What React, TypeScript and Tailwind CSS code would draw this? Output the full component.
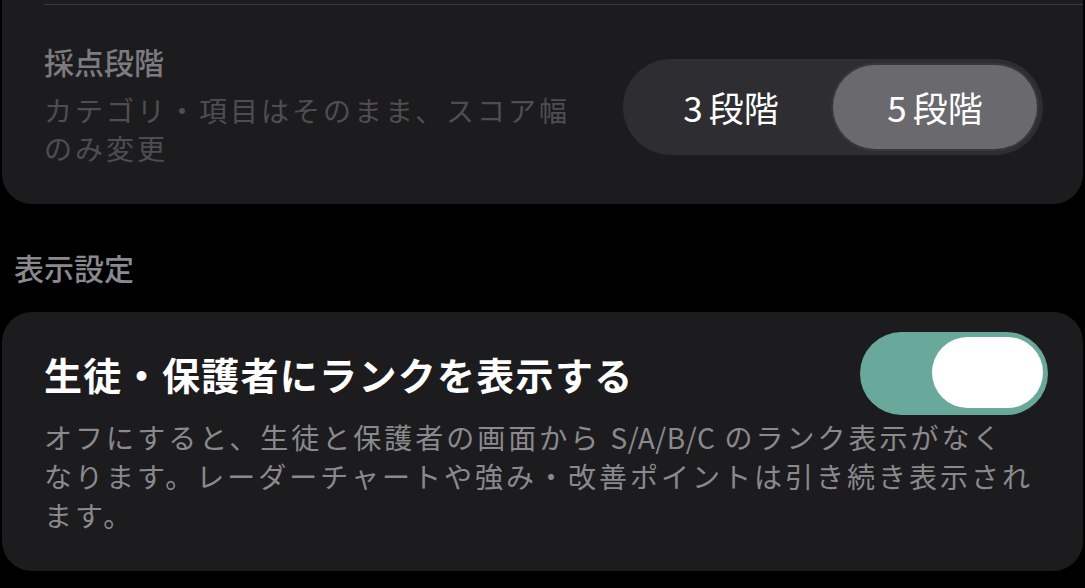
import React from "react";

export default function App() {
  return (
    <div className="w-[1085px] h-[588px] overflow-hidden bg-black font-['Noto_Sans_CJK_JP','Noto_Sans',sans-serif]">
      {/* Top card (continues above viewport) */}
      <div className="mx-[2px] rounded-b-[30px] bg-[#1c1c1e] pt-[4px] pb-[37px]">
        <div className="ml-[42px] h-px bg-[#3a3a3c]" />
        <div className="flex items-start justify-between pl-[42px] pr-[40px] pt-[37px]">
          <div>
            <div className="text-[30px] leading-[38px] font-medium text-[#7c7c80]">採点段階</div>
            <div className="mt-[11px] whitespace-nowrap text-[28px] leading-[38px] tracking-[3px] text-[#4e4e52]">
              カテゴリ・項目はそのまま、スコア幅
              <br />
              のみ変更
            </div>
          </div>
          <div className="mt-[17px] grid h-[96px] w-[420px] grid-cols-2 rounded-full bg-[#2e2e32] p-[6px]">
            <div className="flex items-center justify-center gap-[6px] text-[35px] font-normal text-white">
              <span>3</span>
              <span>段階</span>
            </div>
            <div className="flex items-center justify-center gap-[6px] rounded-full bg-[#69696e] text-[35px] font-normal text-white shadow-[0_0_0_2px_#38383c]">
              <span>5</span>
              <span>段階</span>
            </div>
          </div>
        </div>
      </div>

      {/* Section header */}
      <div className="mt-[44px] pl-[14px] text-[30px] leading-[38px] font-medium text-[#8a8a8e]">
        表示設定
      </div>

      {/* Second card */}
      <div className="mx-[2px] mt-[26px] rounded-[30px] bg-[#1c1c1e] pt-[20px] pb-[36px] pl-[42px] pr-[35px]">
        <div className="flex h-[83px] items-center justify-between">
          <div className="text-[38px] font-bold leading-[46px] tracking-[1.3px] text-white">
            生徒・保護者にランクを表示する
          </div>
          <div className="relative h-[83px] w-[188px] rounded-full bg-[#69a99c]">
            <div className="absolute right-[5px] top-[5px] h-[71px] w-[111px] rounded-full bg-white" />
          </div>
        </div>
        <div className="mt-[3px] whitespace-nowrap text-[28px] leading-[39px] tracking-[3px] text-[#8a8a8e]">
          オフにすると、生徒と保護者の画面から <span className="tracking-[0.5px]">S/A/B/C</span> のランク表示がなく
          <br />
          なります。レーダーチャートや強み・改善ポイントは引き続き表示され
          <br />
          ます。
        </div>
      </div>
    </div>
  );
}
